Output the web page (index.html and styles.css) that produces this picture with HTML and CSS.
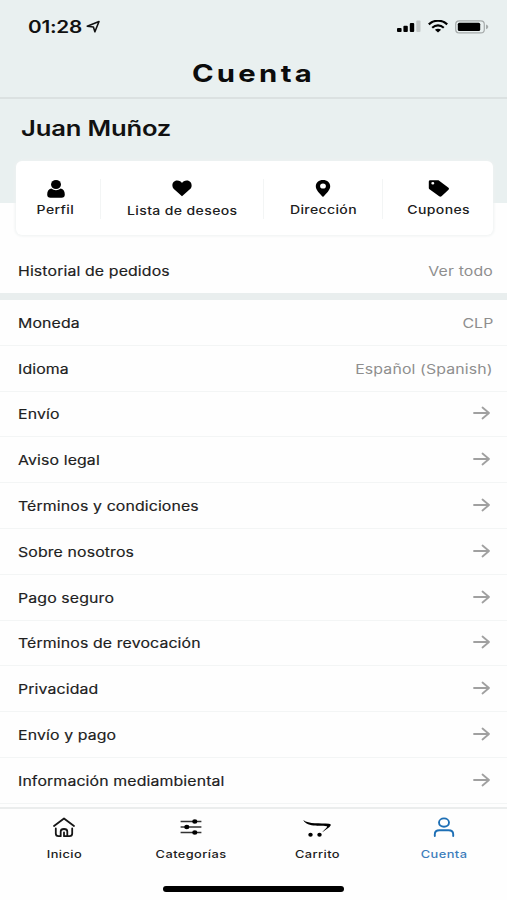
FILE: index.html
```html
<!DOCTYPE html>
<html lang="es">
<head>
    <meta charset="UTF-8">
    <meta name="viewport" content="width=device-width, initial-scale=1.0">
    <title>Cuenta</title>
    <link rel="stylesheet" href="styles.css">
</head>
<body>
    <!-- Cabecera -->
    <header class="top">
        <div class="status">
            <div class="clock">
                <span class="time">01:28</span>
                <svg width="15" height="14" viewBox="0 0 15 14"><path d="M1.2 6.2L13 1.5 8.9 11.8 7.4 7z" fill="none" stroke="#111" stroke-width="1.6" stroke-linejoin="round"/></svg>
            </div>
            <div class="signals">
                <svg width="24" height="13" viewBox="0 0 24 13"><rect x="0" y="8" width="4.6" height="4" rx="1" /><rect x="6.4" y="5.7" width="4.4" height="6.3" rx="1"/><rect x="12.8" y="3" width="4.4" height="9" rx="1"/><rect x="19.3" y="0.6" width="4.2" height="11.4" rx="1" fill="#c3c8c8"/></svg>
                <svg width="20" height="13" viewBox="0 0 20 13"><g fill="none" stroke="#000" stroke-width="2.2"><path d="M.8 4.4C6-.5 14-.5 19.2 4.4"/><path d="M4.2 7.7c3.4-3 8.2-3 11.6 0"/></g><path d="M6.9 9.8c1.8-1.5 4.4-1.5 6.2 0L10 12.6z"/></svg>
                <svg width="34" height="14" viewBox="0 0 34 14"><rect x=".7" y=".9" width="28.6" height="12" rx="3.5" fill="none" stroke="#a5aaaa" stroke-width="1.2"/><rect x="2.8" y="2.7" width="22.4" height="8.4" rx="1.5"/><path d="M31 4.6c3 .8 3 3.9 0 4.7z" fill="#a5aaaa"/></svg>
            </div>
        </div>
        <h1 class="title"><span>Cuenta</span></h1>
    </header>

    <main>
        <section class="profile">
            <h2 class="name"><span>Juan Muñoz</span></h2>
            <nav class="card">
                <a class="shortcut">
                    <svg width="20" height="20" viewBox="0 0 20 20"><ellipse cx="10" cy="5.5" rx="5" ry="4.5"/><path d="M5.2 9.5Q10 12.8 14.8 9.5C17.5 10 18.8 12.5 18.8 15.5Q18.8 18.7 15.5 18.7H4.5Q1.2 18.7 1.2 15.5C1.2 12.5 2.5 10 5.2 9.5z"/></svg>
                    <span>Perfil</span>
                </a>
                <a class="shortcut wish">
                    <svg width="20" height="20" viewBox="0 0 20 20"><path d="M10 17.3L1.6 9.8C-.8 7.1.3 1.5 5.2 1.5 7.5 1.5 9.2 2.6 10 4 10.8 2.6 12.5 1.5 14.8 1.5 19.7 1.5 20.8 7.1 18.4 9.8z"/></svg>
                    <span>Lista de deseos</span>
                </a>
                <a class="shortcut">
                    <svg width="20" height="20" viewBox="0 0 20 20"><path fill-rule="evenodd" d="M10 1C14.2 1 17.2 3.6 17.2 7.3 17.2 11 13.5 14.5 10 18 6.5 14.5 2.8 11 2.8 7.3 2.8 3.6 5.8 1 10 1zM10 4.4A2.9 2.6 0 1 0 10 9.6 2.9 2.6 0 1 0 10 4.4z"/></svg>
                    <span>Dirección</span>
                </a>
                <a class="shortcut">
                    <svg width="22" height="20" viewBox="0 0 22 20"><path fill-rule="evenodd" d="M.8 2.5Q.8 1.2 2.3 1.2H10.5L20.5 8.8Q21.6 9.8 20.5 10.8L13.5 17.3Q12.3 18.2 11.2 17.3L1.5 10.3Q.8 9.8.8 9zM4.8 2.9A1.5 1.3 0 1 0 4.8 5.5 1.5 1.3 0 1 0 4.8 2.9z"/></svg>
                    <span>Cupones</span>
                </a>
            </nav>
        </section>

        <div class="row orders"><span class="label">Historial de pedidos</span><span class="value">Ver todo</span></div>

        <!-- Opciones -->
        <div class="list">
            <div class="row"><span class="label">Moneda</span><span class="value">CLP</span></div>
            <div class="row"><span class="label">Idioma</span><span class="value">Español (Spanish)</span></div>
            <div class="row"><span class="label">Envío</span><svg class="arrow" viewBox="0 0 18 14"><path d="M1 7h15M9.5 1.5L16 7l-6.5 5.5"/></svg></div>
            <div class="row"><span class="label">Aviso legal</span><svg class="arrow" viewBox="0 0 18 14"><path d="M1 7h15M9.5 1.5L16 7l-6.5 5.5"/></svg></div>
            <div class="row"><span class="label">Términos y condiciones</span><svg class="arrow" viewBox="0 0 18 14"><path d="M1 7h15M9.5 1.5L16 7l-6.5 5.5"/></svg></div>
            <div class="row"><span class="label">Sobre nosotros</span><svg class="arrow" viewBox="0 0 18 14"><path d="M1 7h15M9.5 1.5L16 7l-6.5 5.5"/></svg></div>
            <div class="row"><span class="label">Pago seguro</span><svg class="arrow" viewBox="0 0 18 14"><path d="M1 7h15M9.5 1.5L16 7l-6.5 5.5"/></svg></div>
            <div class="row"><span class="label">Términos de revocación</span><svg class="arrow" viewBox="0 0 18 14"><path d="M1 7h15M9.5 1.5L16 7l-6.5 5.5"/></svg></div>
            <div class="row"><span class="label">Privacidad</span><svg class="arrow" viewBox="0 0 18 14"><path d="M1 7h15M9.5 1.5L16 7l-6.5 5.5"/></svg></div>
            <div class="row"><span class="label">Envío y pago</span><svg class="arrow" viewBox="0 0 18 14"><path d="M1 7h15M9.5 1.5L16 7l-6.5 5.5"/></svg></div>
            <div class="row"><span class="label">Información mediambiental</span><svg class="arrow" viewBox="0 0 18 14"><path d="M1 7h15M9.5 1.5L16 7l-6.5 5.5"/></svg></div>
        </div>
    </main>

    <!-- Barra inferior -->
    <footer class="bottom">
        <nav class="tabs">
            <a class="tab">
                <svg width="24" height="22" viewBox="0 0 24 22"><g fill="none" stroke="#161616" stroke-width="1.8" stroke-linecap="round" stroke-linejoin="round"><path d="M2 9L12 1.5 22 9"/><path d="M3.8 11.5V16.5Q3.8 19.2 6.5 19.2H8.7V14.5Q8.7 12 12 12T15.3 14.5V19.2H17.5Q20.2 19.2 20.2 16.5V11.5M12 15.5V19.2H15.3"/></g></svg>
                <span>Inicio</span>
            </a>
            <a class="tab">
                <svg width="24" height="22" viewBox="0 0 24 22"><path d="M1.6 4.5h20.8M1.6 10h20.8M1.6 15.5h20.8" stroke="#333" stroke-width="1.7"/><ellipse cx="15.8" cy="4.5" rx="2.6" ry="2.2"/><ellipse cx="7.8" cy="10" rx="2.6" ry="2.2"/><ellipse cx="15.8" cy="15.5" rx="2.6" ry="2.2"/></svg>
                <span>Categorías</span>
            </a>
            <a class="tab">
                <svg width="30" height="22" viewBox="0 0 30 22"><path d="M1.3 3C7 7.5 18 5.8 27 6.8 29.5 7.2 29.2 8.5 27.5 9.9L20.3 15.3C22 12.8 25.8 10.3 25 9.3 22 8.2 5 11 1.3 3z"/><ellipse cx="8.5" cy="17.8" rx="2.2" ry="2"/><ellipse cx="17.5" cy="17.8" rx="2.2" ry="2"/></svg>
                <span>Carrito</span>
            </a>
            <a class="tab active">
                <svg width="24" height="22" viewBox="0 0 24 22"><g fill="none" stroke="#1d6fb5" stroke-width="1.9" stroke-linecap="round"><ellipse cx="12" cy="5.6" rx="5" ry="4.2"/><path d="M2.8 19V17.2Q2.8 13.2 7.5 13.2H16.5Q21.2 13.2 21.2 17.2V19"/></g></svg>
                <span>Cuenta</span>
            </a>
        </nav>
        <div class="home-bar"></div>
    </footer>
</body>
</html>
```
FILE: styles.css
```css
* {
    box-sizing: border-box;
}
body {
    margin: 0;
    width: 507px;
    height: 900px;
    overflow: hidden;
    display: flex;
    flex-direction: column;
    font-family: 'Inter', sans-serif;
    background: #fefefe;
    color: #202020;
}
/* wide lettering */
span {
    display: inline-block;
    transform: scaleX(1.22);
    white-space: nowrap;
}
svg {
    display: block;
    flex: none;
}
.top {
    height: 99px;
    background: #e9f0f0;
    border-bottom: 2px solid #dbe1e1;
}
.status {
    height: 52px;
    padding: 1px 18px 0 28px;
    display: flex;
    justify-content: space-between;
    align-items: center;
}
.clock {
    display: flex;
    align-items: center;
    gap: 14px;
}
.time {
    font-size: 17px;
    font-weight: 600;
    letter-spacing: -0.2px;
    transform-origin: left;
    color: #111;
}
.signals {
    display: flex;
    align-items: center;
    gap: 7px;
}
.title {
    margin: 0;
    height: 43px;
    font-size: 24px;
    line-height: 44px;
    font-weight: 700;
    letter-spacing: 2.7px;
    text-align: center;
    color: #0c0c0c;
}
.profile {
    height: 148px;
    padding: 0 14px 0 16px;
    background: linear-gradient(#e9f0f0 104px, #fefefe 104px);
}
.name {
    margin: 0;
    padding-left: 5px;
    height: 62px;
    font-size: 21px;
    line-height: 60px;
    font-weight: 600;
    letter-spacing: -0.15px;
    color: #111;
}
.name span {
    transform-origin: left;
}
.card {
    height: 74px;
    display: grid;
    grid-template-columns: 85px 163px 119px 110px;
    background: #fff;
    border-radius: 6px;
    box-shadow: 0 0 3px 1px #eef1f1;
}
.shortcut {
    height: 40px;
    margin-top: 18px;
    display: flex;
    flex-direction: column;
    align-items: center;
    border-right: 1px solid #f3f5f5;
    font-size: 11.5px;
    line-height: 14px;
    font-weight: 500;
    letter-spacing: 0.3px;
}
.shortcut:first-child {
    padding-right: 5px;
}
.shortcut:last-child {
    padding-left: 1px;
    border-right: none;
}
.shortcut span {
    margin-top: 4px;
}
.wish span {
    margin-top: 5px;
}
.row {
    height: 45.8px;
    padding: 1px 14px 0 18px;
    display: flex;
    justify-content: space-between;
    align-items: center;
    border-bottom: 1px solid #f3f5f5;
    font-size: 13px;
    letter-spacing: 0.1px;
}
.orders {
    height: 53px;
    padding-top: 1px;
    border-bottom: 7px solid #e9eeee;
}
.label {
    transform-origin: left;
    -webkit-text-stroke: 0.15px #202020;
}
.value {
    transform-origin: right;
    color: #8e8e8e;
}
.arrow {
    width: 18px;
    height: 14px;
    margin-right: 2px;
    margin-top: -2px;
    fill: none;
    stroke: #a0a0a0;
    stroke-width: 1.8;
    stroke-linecap: round;
    stroke-linejoin: round;
}
.bottom {
    position: absolute;
    top: 807px;
    left: 0;
    width: 507px;
    height: 93px;
    background: #fefefe;
    border-top: 2px solid #ebeded;
}
.tabs {
    height: 77px;
    padding: 8px 0 0 1px;
    display: grid;
    grid-template-columns: repeat(4, 126.6px);
}
.tab {
    display: flex;
    flex-direction: column;
    align-items: center;
    gap: 9px;
    font-size: 10.5px;
    line-height: 14px;
    font-weight: 500;
    letter-spacing: 0.35px;
}
.active {
    color: #3c7dbb;
}
.home-bar {
    width: 181px;
    height: 6px;
    margin: 0 auto;
    border-radius: 3px;
    background: #000;
}
```
